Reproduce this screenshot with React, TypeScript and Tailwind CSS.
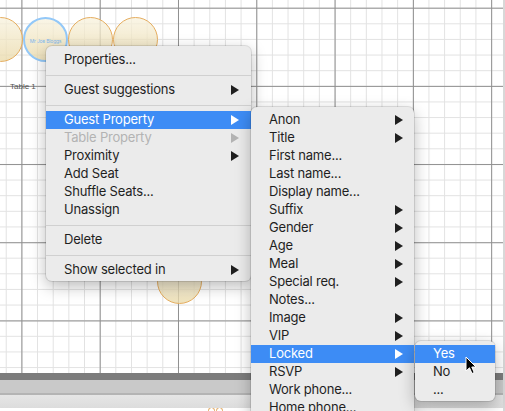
import React from 'react'

type Entry = { label: string; arrow?: boolean; disabled?: boolean; active?: boolean } | null

const mainMenu: Entry[] = [
  { label: 'Properties...' },
  null,
  { label: 'Guest suggestions', arrow: true },
  null,
  { label: 'Guest Property', arrow: true, active: true },
  { label: 'Table Property', arrow: true, disabled: true },
  { label: 'Proximity', arrow: true },
  { label: 'Add Seat' },
  { label: 'Shuffle Seats...' },
  { label: 'Unassign' },
  null,
  { label: 'Delete' },
  null,
  { label: 'Show selected in', arrow: true },
]

const guestMenu: Entry[] = [
  { label: 'Anon', arrow: true },
  { label: 'Title', arrow: true },
  { label: 'First name...' },
  { label: 'Last name...' },
  { label: 'Display name...' },
  { label: 'Suffix', arrow: true },
  { label: 'Gender', arrow: true },
  { label: 'Age', arrow: true },
  { label: 'Meal', arrow: true },
  { label: 'Special req.', arrow: true },
  { label: 'Notes...' },
  { label: 'Image', arrow: true },
  { label: 'VIP', arrow: true },
  { label: 'Locked', arrow: true, active: true },
  { label: 'RSVP', arrow: true },
  { label: 'Work phone...' },
  { label: 'Home phone...' },
]

const lockedMenu: Entry[] = [
  { label: 'Yes', active: true },
  { label: 'No' },
  { label: '...' },
]

function Arrow() {
  return (
    <svg width="8" height="10" viewBox="0 0 8 10" className="fill-current">
      <path d="M0 0L8 5L0 10Z" />
    </svg>
  )
}

function MenuRows({ items, padRight }: { items: Entry[]; padRight: string }) {
  return (
    <>
      {items.map((it, i) =>
        it === null ? (
          <div key={i} className="flex h-[12px] items-center">
            <div className="h-px w-full bg-[#d0d0d0]" />
          </div>
        ) : (
          <div
            key={i}
            className={`flex h-[18px] items-center justify-between pl-[18px] ${padRight} ${
              it.active
                ? 'bg-[#3d8cf5] text-white'
                : it.disabled
                  ? 'text-[#b3b3b3]'
                  : 'text-[#1f1f1f]'
            }`}
          >
            <span>{it.label}</span>
            {it.arrow && <Arrow />}
          </div>
        )
      )}
    </>
  )
}

function Seat({ pos, selected }: { pos: string; selected?: boolean }) {
  return (
    <div
      className={`absolute flex h-[45px] w-[45px] items-center justify-center rounded-full bg-[linear-gradient(to_bottom,rgba(248,242,222,0.75),rgba(234,218,170,0.78))] ${pos} ${
        selected ? 'border-[2.5px] border-[#93c8f8]' : 'border-[1.5px] border-[#e5ad5f]'
      }`}
    >
      {selected && <span className="mt-[3px] text-[5px] leading-none text-[#7db7ee]">Mr Joe Bloggs</span>}
    </div>
  )
}

export default function App() {
  return (
    <div className="relative h-[411px] w-[505px] overflow-hidden bg-white font-['Inter',sans-serif] text-[13px] tracking-[-0.2px]">
      <div className="flex h-full flex-col border-r-[2px] border-[#d8d8d8]">
        {/* canvas */}
        <div className="relative h-[373px] bg-white bg-[image:linear-gradient(to_right,#8f8f8f_1.3px,transparent_1.3px),linear-gradient(to_bottom,#8f8f8f_1.3px,transparent_1.3px),linear-gradient(to_right,#e2e2e2_1px,transparent_1px),linear-gradient(to_bottom,#e2e2e2_1px,transparent_1px)] bg-[size:78.3px_78.2px,78.3px_78.2px,15.66px_15.64px,15.66px_15.64px] bg-[position:21.4px_7.7px,21.4px_7.7px,21.4px_7.7px,21.4px_7.7px]">
          <Seat pos="left-[-22px] top-[17px]" />
          <Seat pos="left-[68px] top-[17px]" />
          <Seat pos="left-[113px] top-[17px]" />
          <Seat pos="left-[23px] top-[17px]" selected />
          <Seat pos="left-[157px] top-[259px]" />
          <span className="absolute left-[10px] top-[81px] font-['Liberation_Sans',sans-serif] text-[8px] tracking-normal text-[#555]">
            Table 1
          </span>
        </div>
        <div className="h-[7px] bg-[#7c7c7c]" />
        <div className="h-[13px] bg-[#c9c9c9]" />
        <div className="h-[2px] bg-[#b4b4b4]" />
        <div className="h-[13px] bg-[linear-gradient(to_bottom,#e6e6e6,#dcdcdc)]" />
        <div className="relative flex-1 overflow-hidden bg-white">
          <div className="absolute left-[208px] top-[-1px] flex gap-[1px]">
            <div className="h-[7px] w-[7px] rounded-full border border-[#e0a050]" />
            <div className="h-[7px] w-[7px] rounded-full border border-[#e0a050]" />
          </div>
          <span className="absolute left-[418px] top-[-1px] whitespace-nowrap font-['Liberation_Sans',sans-serif] text-[11px] tracking-normal text-[#444]">
            1 (7 Seats of 8)
          </span>
        </div>
      </div>

      {/* context menu */}
      <div className="absolute left-[46px] top-[46px] w-[205px] rounded-[6px] bg-[#ebebeb] pb-[2px] pt-[5px] shadow-[0_5px_16px_rgba(0,0,0,0.28)] ring-1 ring-black/10">
        <MenuRows items={mainMenu} padRight="pr-[12px]" />
      </div>

      {/* Guest Property submenu */}
      <div className="absolute left-[251px] top-[107px] w-[163px] rounded-[6px] bg-[#ebebeb] pb-[4px] pt-[4px] shadow-[0_5px_16px_rgba(0,0,0,0.28)] ring-1 ring-black/10">
        <MenuRows items={guestMenu} padRight="pr-[11px]" />
      </div>

      {/* Locked submenu */}
      <div className="absolute left-[415px] top-[341px] w-[80px] rounded-[6px] bg-[#ebebeb] pb-[2px] pt-[4px] shadow-[0_5px_16px_rgba(0,0,0,0.28)] ring-1 ring-black/10">
        <MenuRows items={lockedMenu} padRight="pr-[11px]" />
      </div>

      {/* pointer */}
      <svg className="absolute left-[465px] top-[356px]" width="12" height="19" viewBox="0 0 12 19">
        <path d="M1 1L1 15L4.5 11.8L7 17.5L9.2 16.5L6.8 11L11 11Z" fill="#000" stroke="#fff" strokeWidth="1" strokeLinejoin="round" />
      </svg>
    </div>
  )
}
